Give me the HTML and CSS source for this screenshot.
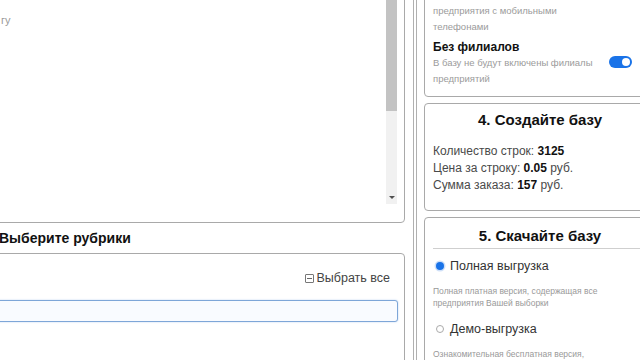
FILE: index.html
```html
<!DOCTYPE html>
<html lang="ru">
<head>
<meta charset="utf-8">
<link rel="stylesheet" href="styles.css">
</head>
<body>
<div class="page">
  <div class="left">
    <div class="list-box">
      <div class="list">
        <div class="list-item">гу</div>
      </div>
      <div class="scrollbar">
        <div class="thumb"></div>
        <div class="track"></div>
        <div class="arrow"></div>
      </div>
    </div>
    <div class="section-title">Выберите рубрики</div>
    <div class="rubric-box">
      <div class="rubric-tools">
        <span class="select-all"><span class="sq-icon"></span>Выбрать все</span>
      </div>
      <div class="search"></div>
    </div>
  </div>
  <div class="divider"></div>
  <div class="right">
    <div class="card card-options">
      <div class="opt">
        <div class="opt-title">Только с мобильными</div>
        <div class="opt-row">
          <div class="opt-desc">В базу будут включены только предприятия с мобильными телефонами</div>
          <span class="toggle"></span>
        </div>
      </div>
      <div class="opt">
        <div class="opt-title">Без филиалов</div>
        <div class="opt-row">
          <div class="opt-desc">В базу не будут включены филиалы предприятий</div>
          <span class="toggle on"></span>
        </div>
      </div>
    </div>
    <div class="card card-create">
      <div class="card-title">4. Создайте базу</div>
      <div class="stats">
        <div class="stat">Количество строк: <b>3125</b></div>
        <div class="stat">Цена за строку: <b>0.05</b> руб.</div>
        <div class="stat">Сумма заказа: <b>157</b> руб.</div>
      </div>
    </div>
    <div class="card card-download">
      <div class="card-title underlined">5. Скачайте базу</div>
      <label class="radio-row first"><span class="radio checked"></span>Полная выгрузка</label>
      <div class="radio-desc">Полная платная версия, содержащая все предприятия Вашей выборки</div>
      <label class="radio-row second"><span class="radio"></span>Демо-выгрузка</label>
      <div class="radio-desc">Ознакомительная бесплатная версия, содержащая часть предприятий</div>
    </div>
  </div>
</div>
</body>
</html>
```
FILE: styles.css
```css
html, body {
  margin: 0;
  padding: 0;
  background: #fff;
  overflow: hidden;
  width: 640px;
  height: 360px;
  font-family: "Liberation Sans", Arial, sans-serif;
}
.page {
  display: flex;
  align-items: flex-start;
  margin-top: -40px;
  margin-left: -10px;
}
.left {
  width: 415px;
  flex: none;
}
.list-box {
  height: 263px;
  box-sizing: border-box;
  border: 1px solid #a9a9a9;
  border-radius: 4px;
  display: flex;
}
.list {
  flex: 1;
  padding: 53px 0 0 10px;
}
.list-item {
  font-size: 11px;
  color: #9a9a9a;
}
.scrollbar {
  width: 11px;
  margin: 0 7px 18px 0;
  display: flex;
  flex-direction: column;
  background: #f1f1f1;
}
.thumb {
  height: 150px;
  background: #c3c3c3;
}
.track {
  flex: 1;
}
.arrow {
  width: 0;
  height: 0;
  margin: 0 auto 5px;
  border-left: 3px solid transparent;
  border-right: 3px solid transparent;
  border-top: 3px solid #505050;
}
.section-title {
  font-size: 14px;
  font-weight: bold;
  color: #111;
  margin: 7px 0 0 9px;
  line-height: 16px;
}
.rubric-box {
  margin-top: 7px;
  height: 140px;
  border: 1px solid #a9a9a9;
  border-radius: 4px;
  padding: 17px 6px 0 0;
}
.rubric-tools {
  display: flex;
  justify-content: flex-end;
  padding-right: 8px;
}
.select-all {
  display: flex;
  align-items: center;
  font-size: 12.5px;
  color: #444;
}
.sq-icon {
  width: 7px;
  height: 7px;
  border: 1px solid #777;
  border-radius: 1px;
  margin-right: 2px;
  position: relative;
}
.sq-icon::after {
  content: "";
  position: absolute;
  left: 1px;
  right: 1px;
  top: 3px;
  height: 1px;
  background: #666;
}
.search {
  margin-top: 15px;
  height: 20px;
  border: 1px solid #7ea6d8;
  border-radius: 3px;
  background: #f9fbff;
  box-shadow: 0 0 2px #b9d1ef;
}
.divider {
  flex: none;
  width: 2px;
  height: 420px;
  margin-left: 8px;
  border-left: 1px solid #b0b0b0;
  border-right: 1px solid #b0b0b0;
}
.right {
  flex: none;
  width: 232px;
  margin-left: 7px;
  display: flex;
  flex-direction: column;
  gap: 6px;
}
.card {
  border: 1px solid #a9a9a9;
  border-radius: 4px;
  box-sizing: border-box;
  padding: 0 8px;
}
.card-options {
  height: 137px;
  padding-top: 9px;
}
.opt-title {
  font-size: 12px;
  font-weight: bold;
  color: #111;
  line-height: 16px;
}
.opt {
  margin-bottom: 3px;
}
.opt-row {
  display: flex;
  align-items: flex-start;
  justify-content: space-between;
}
.opt-desc {
  width: 170px;
  font-size: 9.5px;
  line-height: 16.5px;
  color: #9b9b9b;
  margin-top: 0;
}
.toggle {
  width: 23px;
  height: 12px;
  border-radius: 7px;
  background: #e2e2e2;
  margin: 1px 15px 0 0;
  position: relative;
  flex: none;
}
.toggle::after {
  content: "";
  position: absolute;
  left: 2px;
  top: 2px;
  width: 8px;
  height: 8px;
  border-radius: 50%;
  background: #fff;
}
.toggle.on {
  background: #1a73e8;
}
.toggle.on::after {
  left: 13px;
}
.card-create {
  height: 108px;
  padding-top: 7px;
}
.card-title {
  text-align: center;
  font-size: 15px;
  font-weight: bold;
  color: #111;
  line-height: 18px;
}
.stats {
  margin-top: 14px;
}
.stat {
  font-size: 12px;
  color: #4a4a4a;
  line-height: 17px;
}
.stat b {
  color: #111;
}
.card-download {
  height: 180px;
  padding-top: 9px;
}
.underlined {
  border-bottom: 1px solid #cfcfcf;
  padding-bottom: 3px;
}
.radio-row {
  display: flex;
  align-items: center;
  font-size: 12.5px;
  color: #333;
  line-height: 18px;
  padding-left: 3px;
}
.radio-row.first {
  margin-top: 8px;
}
.radio-row.second {
  margin-top: 11px;
}
.radio {
  width: 8px;
  height: 8px;
  border-radius: 50%;
  border: 1px solid #aaa;
  margin-right: 6px;
  box-sizing: border-box;
}
.radio.checked {
  border: none;
  background: #1a73e8;
  box-shadow: 0 0 0 1.5px #cfe0f8;
}
.radio-desc {
  font-size: 8.5px;
  line-height: 12px;
  color: #999;
  margin-top: 10px;
  width: 180px;
}
```
